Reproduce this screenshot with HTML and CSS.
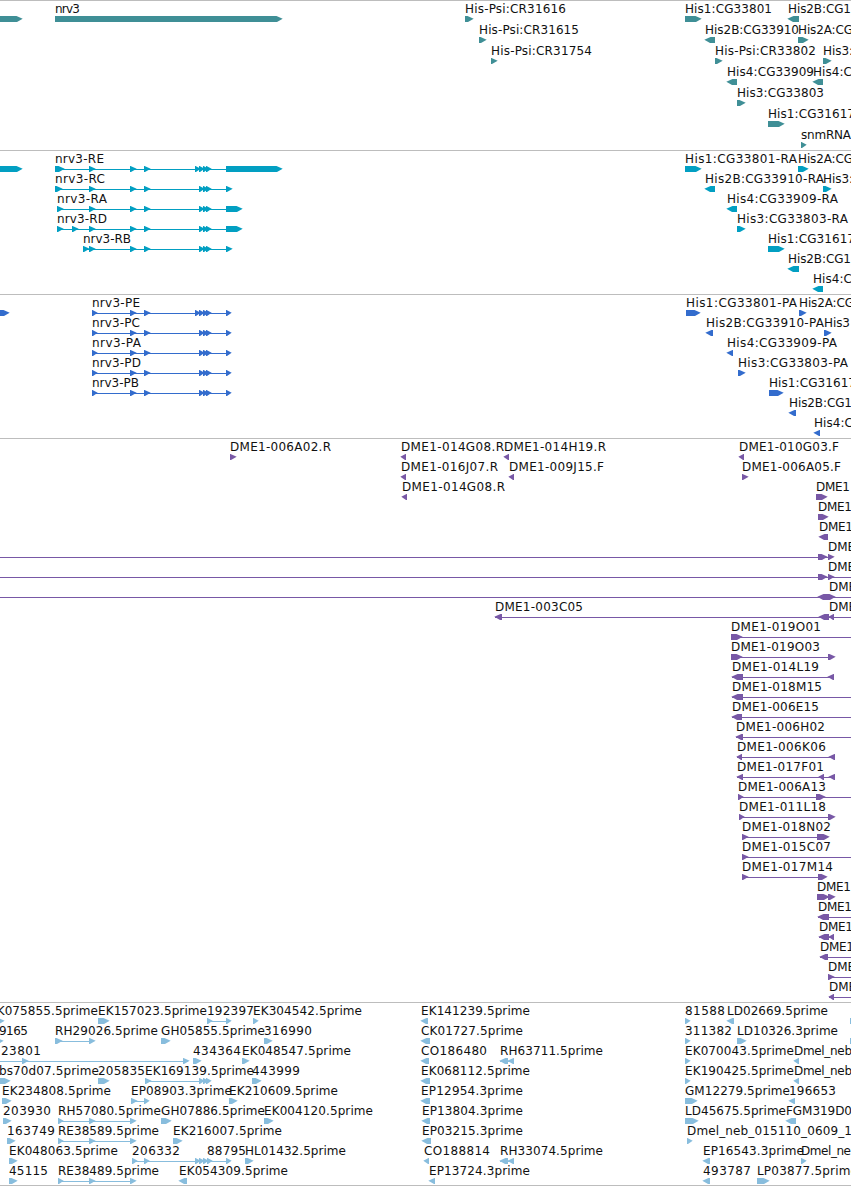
FILE: index.html
```
<!DOCTYPE html>
<html lang="en">
<head>
<meta charset="utf-8">
<title>Genome tracks</title>
<link rel="stylesheet" href="styles.css">
</head>
<body>
<main class="tracks">
  <section class="track genes"></section>
  <section class="track transcripts"></section>
  <section class="track proteins"></section>
  <section class="track clones"></section>
  <section class="track ests"></section>
</main>
<script src="tracks.js"></script>
</body>
</html>
```
FILE: styles.css
```
body {
  margin: 0;
  background: #fff;
  font-family: "DejaVu Sans", "Liberation Sans", sans-serif;
}
.tracks {
  display: flex;
  flex-direction: column;
  width: 851px;
  height: 1186px;
  overflow: hidden;
}
.track {
  box-sizing: border-box;
  flex: none;
  border-top: 1px solid #bdbdbd;
}
.genes { height: 150px; color: #3f8f96; }
.transcripts { height: 144px; color: #029fc2; }
.proteins { height: 144px; color: #336ccd; }
.clones { height: 564px; color: #7858a6; }
.ests { height: 184px; color: #88bddd; border-bottom: 1px solid #bdbdbd; }
.canvas {
  display: block;
  width: 851px;
  height: 100%;
  overflow: hidden;
}
.feature { fill: currentColor; }
.label { fill: #111; font-size: 12px; }
```
FILE: tracks.js
```
// Feature: [row, label, label start, label end, strand, segments, line start, line end]
const R = 1, L = -1;
const exons = [[89, 95], [130, 136], [144, 150]];
const tail = [[199, 204], [203, 208], [206, 211]];
const cds = [[92, 97], [130, 136], [144, 150]];

const genes = [
  [0, '', 0, 0, R, [[-10, 22]]],
  [0, 'nrv3', 55, 80, R, [[55, 282]]],
  [0, 'His-Psi:CR31616', 465, 566, R, [[465, 473]]],
  [0, 'His1:CG33801', 685, 772, R, [[685, 701]]],
  [0, 'His2B:CG1', 788, 851, L, [[788, 799]]],
  [1, 'His-Psi:CR31615', 479, 579, R, [[479, 486]]],
  [1, 'His2B:CG33910', 705, 799, L, [[705, 715]]],
  [1, 'His2A:CG', 798, 853, R, [[798, 808]]],
  [2, 'His-Psi:CR31754', 491, 592, R, [[491, 497]]],
  [2, 'His-Psi:CR33802', 715, 816, R, [[715, 722]]],
  [2, 'His3:', 823, 853, R, [[823, 831]]],
  [3, 'His4:CG33909', 727, 814, L, [[727, 737]]],
  [3, 'His4:C', 813, 852, L, [[813, 823]]],
  [4, 'His3:CG33803', 737, 824, R, [[737, 745]]],
  [5, 'His1:CG31617', 768, 855, R, [[768, 784]]],
  [6, 'snmRNA', 801, 851, R, [[801, 806]]]
];

const transcripts = [
  [0, '', 0, 0, R, [[-10, 22]]],
  [0, 'nrv3-RE', 55, 104, R, [[55, 64], ...exons, [195, 200], ...tail, [226, 282]]],
  [1, 'nrv3-RC', 55, 105, R, [[55, 62], ...exons, ...tail, [226, 232]]],
  [2, 'nrv3-RA', 57, 107, R, [[57, 63], ...exons, ...tail, [226, 242]]],
  [3, 'nrv3-RD', 57, 107, R, [[57, 63], [72, 78], ...exons, ...tail, [226, 242]]],
  [4, 'nrv3-RB', 83, 131, R, [[83, 89], ...exons, ...tail, [226, 232]]],
  [0, 'His1:CG33801-RA', 685, 797, R, [[685, 701]]],
  [0, 'His2A:CG', 798, 853, R, [[798, 808]]],
  [1, 'His2B:CG33910-RA', 705, 824, L, [[705, 715]]],
  [1, 'His3:', 823, 853, R, [[823, 831]]],
  [2, 'His4:CG33909-RA', 727, 838, L, [[727, 737]]],
  [3, 'His3:CG33803-RA', 737, 848, R, [[737, 745]]],
  [4, 'His1:CG31617', 768, 855, R, [[768, 784]]],
  [5, 'His2B:CG1', 788, 851, L, [[788, 799]]],
  [6, 'His4:C', 813, 852, L, [[813, 823]]]
];

const proteins = [
  [0, '', 0, 0, R, [[-10, 9]]],
  [0, 'nrv3-PE', 92, 140, R, [...cds, [195, 200], ...tail, [226, 231]]],
  [1, 'nrv3-PC', 92, 140, R, [...cds, ...tail, [226, 231]]],
  [2, 'nrv3-PA', 92, 141, R, [...cds, ...tail, [226, 231]]],
  [3, 'nrv3-PD', 92, 141, R, [...cds, ...tail, [226, 231]]],
  [4, 'nrv3-PB', 92, 139, R, [...cds, ...tail, [226, 231]]],
  [0, 'His1:CG33801-PA', 686, 797, R, [[686, 700]]],
  [0, 'His2A:CG', 799, 854, R, [[799, 806]]],
  [1, 'His2B:CG33910-PA', 706, 824, L, [[706, 713]]],
  [1, 'His3', 824, 850, R, [[824, 831]]],
  [2, 'His4:CG33909-PA', 727, 837, L, [[727, 733]]],
  [3, 'His3:CG33803-PA', 738, 848, R, [[738, 745]]],
  [4, 'His1:CG31617', 769, 856, R, [[769, 783]]],
  [5, 'His2B:CG1', 789, 852, L, [[789, 796]]],
  [6, 'His4:C', 814, 853, L, [[814, 820]]]
];

const clones = [
  [0, 'DME1-006A02.R', 230, 331, R, [[230, 236]]],
  [0, 'DME1-014G08.R', 401, 504, L, [[401, 406]]],
  [0, 'DME1-014H19.R', 504, 606, L, [[504, 509]]],
  [0, 'DME1-010G03.F', 739, 839, L, [[739, 744]]],
  [1, 'DME1-016J07.R', 401, 498, L, [[401, 406]]],
  [1, 'DME1-009J15.F', 509, 604, L, [[509, 514]]],
  [1, 'DME1-006A05.F', 742, 841, R, [[742, 748]]],
  [2, 'DME1-014G08.R', 402, 505, L, [[402, 407]]],
  [2, 'DME1', 816, 850, R, [[816, 827]]],
  [3, 'DME1', 818, 852, R, [[818, 828]]],
  [4, 'DME1', 819, 853, L, [[819, 828]]],
  [5, 'DME', 828, 855, R, [[818, 827], [828, 834]], -5],
  [6, 'DME', 828, 855, R, [[818, 827], [828, 834]], -5, 860],
  [7, 'DME', 829, 856, L, [[818, 827]], -5, 860],
  [7, '', 0, 0, R, [[826, 835]]],
  [8, 'DME1-003C05', 495, 583, L, [[495, 502], [819, 829], [829, 834]], 495, 860],
  [8, 'DME', 829, 856, R, []],
  [9, 'DME1-019O01', 731, 821, R, [[731, 742]], 731, 860],
  [10, 'DME1-019O03', 731, 820, R, [[731, 742], [828, 835]]],
  [11, 'DME1-014L19', 732, 819, L, [[732, 743], [828, 834]]],
  [12, 'DME1-018M15', 732, 822, L, [[732, 743]], 732, 860],
  [13, 'DME1-006E15', 732, 819, L, [[732, 742]], 732, 860],
  [14, 'DME1-006H02', 736, 825, L, [[736, 743]], 736, 860],
  [15, 'DME1-006K06', 737, 826, L, [[737, 742], [829, 835]]],
  [16, 'DME1-017F01', 737, 824, L, [[737, 743], [819, 824], [829, 835]]],
  [17, 'DME1-006A13', 738, 826, R, [[738, 743], [816, 825]], 738, 860],
  [18, 'DME1-011L18', 739, 826, R, [[739, 744], [828, 835]]],
  [19, 'DME1-018N02', 742, 831, R, [[742, 748], [817, 829]]],
  [20, 'DME1-015C07', 742, 831, R, [[742, 748]], 742, 860],
  [21, 'DME1-017M14', 742, 833, R, [[742, 748], [818, 827]]],
  [22, 'DME1', 817, 851, R, [[817, 829], [828, 835]]],
  [23, 'DME1', 818, 852, L, [[818, 829]], 818, 860],
  [24, 'DME1', 819, 853, L, [[819, 829], [829, 834]]],
  [25, 'DME1', 820, 854, L, [[820, 828]], 820, 860],
  [26, 'DME', 828, 855, R, [[828, 834]], 828, 860],
  [27, 'DME', 829, 856, L, [[829, 834]], 829, 860]
];

const spliced = [[58, 63], [89, 95], [130, 136]];
const ests = [
  [0, 'EK075855.5prime', -11, 98, R, [[-6, 4]]],
  [0, 'EK157023.5prime', 98, 207, R, [[98, 109]]],
  [0, '192397', 207, 254, R, [[207, 212], [226, 231]]],
  [0, 'EK304542.5prime', 253, 362, R, [[253, 258]]],
  [0, 'EK141239.5prime', 421, 530, L, [[421, 428]]],
  [0, '81588', 685, 725, R, [[685, 690]]],
  [0, 'LD02669.5prime', 727, 828, L, [[727, 734]]],
  [0, '', 0, 0, R, [[850, 862]]],
  [1, '9165', -1, 28, R, [[-6, 3]]],
  [1, 'RH29026.5prime', 55, 158, R, [[55, 62], [89, 95]]],
  [1, 'GH05855.5prime', 161, 265, R, [[161, 170]]],
  [1, '316990', 264, 312, R, [[264, 272]]],
  [1, 'CK01727.5prime', 421, 523, L, [[421, 430]]],
  [1, '311382', 685, 732, R, [[685, 690]]],
  [1, 'LD10326.3prime', 737, 838, R, [[737, 746]]],
  [1, '', 0, 0, R, [[850, 862]]],
  [2, '23801', 1, 41, R, [[22, 28], [183, 189]], -5, 188],
  [2, '434364', 193, 241, R, [[193, 201]]],
  [2, 'EK048547.5prime', 242, 351, R, [[242, 249]]],
  [2, 'CO186480', 421, 487, L, [[421, 429]]],
  [2, 'RH63711.5prime', 500, 603, L, [[500, 508], [508, 514]]],
  [2, 'EK070043.5prime', 685, 794, R, [[685, 690]]],
  [2, 'Dmel_neb', 794, 852, L, [[794, 799]]],
  [3, 'bs70d07.5prime', -1, 99, R, [[-6, 10]]],
  [3, '205835', 98, 145, R, [[98, 109]]],
  [3, 'EK169139.5prime', 145, 254, R, [[145, 151], ...tail]],
  [3, '443999', 252, 300, R, [[252, 261]]],
  [3, 'EK068112.5prime', 421, 530, L, [[421, 430]]],
  [3, 'EK190425.5prime', 685, 794, R, [[685, 690]]],
  [3, 'Dmel_neb', 794, 852, L, [[794, 799]]],
  [4, 'EK234808.5prime', 2, 111, R, [[2, 11]]],
  [4, 'EP08903.3prime', 131, 232, R, [[131, 137], [144, 149]]],
  [4, 'EK210609.5prime', 229, 338, R, [[229, 237]]],
  [4, 'EP12954.3prime', 421, 523, L, [[421, 430]]],
  [4, 'GM12279.5prime', 685, 790, R, [[685, 697]]],
  [4, '196653', 789, 836, L, [[789, 795]]],
  [5, '203930', 3, 51, R, [[3, 11]]],
  [5, 'RH57080.5prime', 58, 161, R, spliced],
  [5, 'GH07886.5prime', 161, 265, R, [[161, 171]]],
  [5, 'EK004120.5prime', 264, 373, R, [[264, 273]]],
  [5, 'EP13804.3prime', 422, 523, L, [[422, 430]]],
  [5, 'LD45675.5prime', 685, 786, R, [[685, 698]]],
  [5, 'FGM319D0', 786, 852, L, [[786, 796]]],
  [6, '163749', 7, 55, R, [[7, 15]]],
  [6, 'RE38589.5prime', 58, 159, R, spliced],
  [6, 'EK216007.5prime', 173, 282, R, [[173, 182]]],
  [6, 'EP03215.3prime', 422, 523, L, [[422, 431]]],
  [6, 'Dmel_neb_015110_0609_1', 687, 852, R, [[687, 692]]],
  [7, 'EK048063.5prime', 9, 118, R, [[9, 17]]],
  [7, '206332', 132, 180, R, [[132, 137], [144, 149], [195, 200], [199, 204], [203, 208], [207, 212], [226, 231]]],
  [7, '88795', 207, 246, R, []],
  [7, 'HL01432.5prime', 245, 346, R, [[245, 253]]],
  [7, 'CO188814', 424, 490, L, [[424, 429]]],
  [7, 'RH33074.5prime', 500, 603, L, [[500, 508], [508, 514]]],
  [7, 'EP16543.3prime', 703, 804, L, [[703, 710]]],
  [7, 'Dmel_ne', 801, 851, R, [[801, 806]]],
  [8, '45115', 9, 48, R, [[9, 17]]],
  [8, 'RE38489.5prime', 58, 159, R, spliced],
  [8, 'EK054309.5prime', 179, 288, L, [[179, 187]]],
  [8, 'EP13724.3prime', 429, 530, L, [[429, 435]]],
  [8, '493787', 703, 751, L, [[703, 710]]],
  [8, 'LP03877.5prime', 757, 858, R, [[757, 769]]]
];

const NS = 'http://www.w3.org/2000/svg';
function add(parent, name, attrs) {
  const el = document.createElementNS(NS, name);
  for (const key in attrs) el.setAttribute(key, attrs[key]);
  parent.appendChild(el);
  return el;
}

// A box six pixels high that ends in a point on the side of its strand.
function arrow(a, b, y, strand) {
  const head = Math.min(6, b - a);
  if (strand === R) {
    return `M${a} ${y}H${b - head + 0.5}L${b + 0.7} ${y + 2.8}L${b - head + 1} ${y + 6}H${a}Z`;
  }
  return `M${b} ${y}H${a + head - 0.5}L${a - 0.7} ${y + 2.8}L${a + head - 1} ${y + 6}H${b}Z`;
}

function draw(selector, features, pitch) {
  const svg = add(document.querySelector(selector), 'svg', { class: 'canvas' });
  for (const [row, text, x, end, strand, segments, from, to] of features) {
    const y = 15 + row * pitch;
    const group = add(svg, 'g', { class: 'feature' });
    if (segments.length > 1 || from !== undefined) {
      const a = from ?? segments[0][0];
      const b = to ?? segments[segments.length - 1][1] - 2;
      add(group, 'rect', { x: a, y: y + 3, width: b - a, height: 1 });
    }
    for (const [a, b] of segments) add(group, 'path', { d: arrow(a, b, y, strand) });
    if (text) {
      const label = add(svg, 'text', {
        class: 'label', x, y: y - 3, textLength: end - x
      });
      label.textContent = text;
    }
  }
}

draw('.genes', genes, 21);
draw('.transcripts', transcripts, 20);
draw('.proteins', proteins, 20);
draw('.clones', clones, 20);
draw('.ests', ests, 20);
```
